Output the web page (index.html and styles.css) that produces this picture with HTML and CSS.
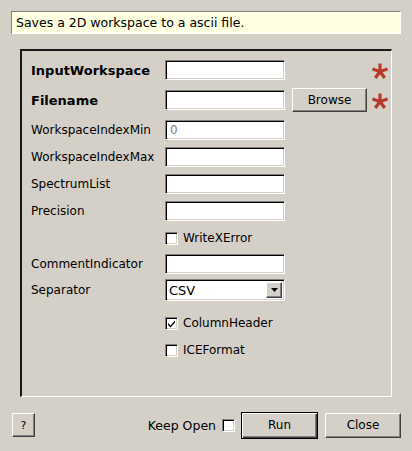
FILE: index.html
```html
<!DOCTYPE html>
<html>
<head>
<meta charset="utf-8">
<link rel="stylesheet" href="styles.css">
</head>
<body>
<div class="dialog">
  <div class="info">Saves a 2D workspace to a ascii file.</div>
  <div class="frame">
    <div class="form">
      <div class="lbl bold">InputWorkspace</div>
      <div class="field"></div>
      <div></div>
      <div class="star"><svg width="16" height="16" viewBox="0 0 16 16"><g stroke="#b8382b" stroke-width="3.2" stroke-linecap="butt"><line x1="8" y1="8.5" x2="8" y2="0.5"/><line x1="8" y1="8.5" x2="15.6" y2="6"/><line x1="8" y1="8.5" x2="12.7" y2="15"/><line x1="8" y1="8.5" x2="3.3" y2="15"/><line x1="8" y1="8.5" x2="0.4" y2="6"/></g></svg></div>

      <div class="lbl bold">Filename</div>
      <div class="field"></div>
      <div class="btn browse">Browse</div>
      <div class="star"><svg width="16" height="16" viewBox="0 0 16 16"><g stroke="#b8382b" stroke-width="3.2" stroke-linecap="butt"><line x1="8" y1="8.5" x2="8" y2="0.5"/><line x1="8" y1="8.5" x2="15.6" y2="6"/><line x1="8" y1="8.5" x2="12.7" y2="15"/><line x1="8" y1="8.5" x2="3.3" y2="15"/><line x1="8" y1="8.5" x2="0.4" y2="6"/></g></svg></div>

      <div class="lbl">WorkspaceIndexMin</div>
      <div class="field ph">0</div>
      <div></div><div></div>

      <div class="lbl">WorkspaceIndexMax</div>
      <div class="field"></div>
      <div></div><div></div>

      <div class="lbl">SpectrumList</div>
      <div class="field"></div>
      <div></div><div></div>

      <div class="lbl">Precision</div>
      <div class="field"></div>
      <div></div><div></div>

      <div></div>
      <label class="chk"><span class="box"></span>WriteXError</label>
      <div></div><div></div>

      <div class="lbl">CommentIndicator</div>
      <div class="field"></div>
      <div></div><div></div>

      <div class="lbl">Separator</div>
      <div class="combo"><span class="cval">CSV</span><span class="arrow"><svg width="7" height="4" viewBox="0 0 7 4"><path d="M0 0H7L3.5 4Z" fill="#000"/></svg></span></div>
      <div></div><div></div>

      <div></div>
      <label class="chk"><span class="box"><svg width="9" height="9" viewBox="0 0 9 9"><path d="M1 4 L3.5 6.5 L8 1.5 V3.5 L3.5 8.5 L1 6 Z" fill="#000"/></svg></span>ColumnHeader</label>
      <div></div><div></div>

      <div></div>
      <label class="chk"><span class="box"></span>ICEFormat</label>
      <div></div><div></div>
    </div>
  </div>
  <div class="bottom">
    <div class="btn help">?</div>
    <div class="spacer"></div>
    <label class="keep">Keep Open <span class="box"></span></label>
    <div class="btn run">Run</div>
    <div class="btn close">Close</div>
  </div>
</div>
</body>
</html>
```

FILE: styles.css
```css
html, body {
  margin: 0;
  padding: 0;
  background: #d4d0c8;
}
body {
  font-family: "DejaVu Sans", sans-serif;
  font-size: 12px;
  color: #000;
}
.dialog {
  width: 412px;
  height: 451px;
  padding: 11px 11px 0 11px;
  box-sizing: border-box;
}
.info {
  height: 23px;
  width: 390px;
  box-sizing: border-box;
  background: #ffffe1;
  border-top: 1px solid #808080;
  border-left: 1px solid #808080;
  border-right: 1px solid #fff;
  border-bottom: 1px solid #fff;
  font-size: 12.5px;
  line-height: 21px;
  padding-left: 4px;
}
.frame {
  margin: 15px 0 0 9px;
  width: 372px;
  height: 348px;
  box-sizing: border-box;
  border-top: 2px solid #1a1a1a;
  border-left: 2px solid #1a1a1a;
  border-right: 1px solid #fff;
  border-bottom: 1px solid #fff;
  padding: 4px 0 0 9px;
}
.form {
  display: grid;
  grid-template-columns: 134px 120px 88px 20px;
  grid-template-rows: 30px 30px 30px 24px 30px 24px 30px 22px 30px 36px 18px;
  align-items: center;
}
.lbl {
  white-space: nowrap;
}
.bold {
  font-weight: bold;
  font-size: 13px;
}
.field {
  height: 20px;
  box-sizing: border-box;
  background: #fff;
  border-top: 1px solid #808080;
  border-left: 1px solid #808080;
  border-right: 1px solid #fff;
  border-bottom: 1px solid #fff;
  box-shadow: inset 1px 1px 0 #000, inset -1px -1px 0 #d4d0c8;
  padding-left: 4px;
  line-height: 18px;
}
.ph {
  color: #808080;
}
.btn {
  box-sizing: border-box;
  display: flex;
  align-items: center;
  justify-content: center;
  background: #d4d0c8;
  border-top: 1px solid #fff;
  border-left: 1px solid #fff;
  border-right: 1px solid #404040;
  border-bottom: 1px solid #404040;
  box-shadow: inset -1px -1px 0 #808080;
}
.browse {
  width: 75px;
  height: 24px;
  margin-left: 7px;
}
.star {
  display: flex;
  align-items: center;
  height: 16px;
  margin-left: -1px;
  margin-top: 2px;
}
.star svg {
  display: block;
}
.chk {
  display: flex;
  align-items: center;
  gap: 5px;
  height: 20px;
}
.box {
  width: 13px;
  height: 13px;
  box-sizing: border-box;
  background: #fff;
  border-top: 1px solid #808080;
  border-left: 1px solid #808080;
  border-right: 1px solid #fff;
  border-bottom: 1px solid #fff;
  box-shadow: inset 1px 1px 0 #000, inset -1px -1px 0 #d4d0c8;
  display: flex;
  align-items: center;
  justify-content: center;
}
.box svg {
  display: block;
}
.combo {
  height: 22px;
  box-sizing: border-box;
  background: #fff;
  border-top: 1px solid #808080;
  border-left: 1px solid #808080;
  border-right: 1px solid #fff;
  border-bottom: 1px solid #fff;
  box-shadow: inset 1px 1px 0 #000, inset -1px -1px 0 #d4d0c8;
  display: flex;
  align-items: center;
  padding: 2px 2px 2px 3px;
}
.cval {
  flex: 1;
  font-size: 13px;
}
.arrow {
  width: 16px;
  height: 16px;
  box-sizing: border-box;
  background: #d4d0c8;
  border-top: 1px solid #fff;
  border-left: 1px solid #fff;
  border-right: 1px solid #404040;
  border-bottom: 1px solid #404040;
  box-shadow: inset -1px -1px 0 #808080;
  display: flex;
  align-items: center;
  justify-content: center;
}
.arrow svg {
  display: block;
}
.bottom {
  display: flex;
  align-items: center;
  margin-top: 15px;
  height: 26px;
  width: 390px;
}
.help {
  width: 23px;
  height: 24px;
  margin-left: 1px;
  font-size: 11px;
}
.spacer {
  flex: 1;
}
.keep {
  display: flex;
  align-items: center;
  gap: 6px;
  margin-right: 6px;
  font-size: 12.5px;
}
.run {
  width: 77px;
  height: 27px;
  border: 1px solid #000;
  box-shadow: inset 1px 1px 0 #fff, inset -1px -1px 0 #404040, inset -2px -2px 0 #808080;
}
.close {
  width: 76px;
  height: 25px;
  margin-left: 7px;
}
```
